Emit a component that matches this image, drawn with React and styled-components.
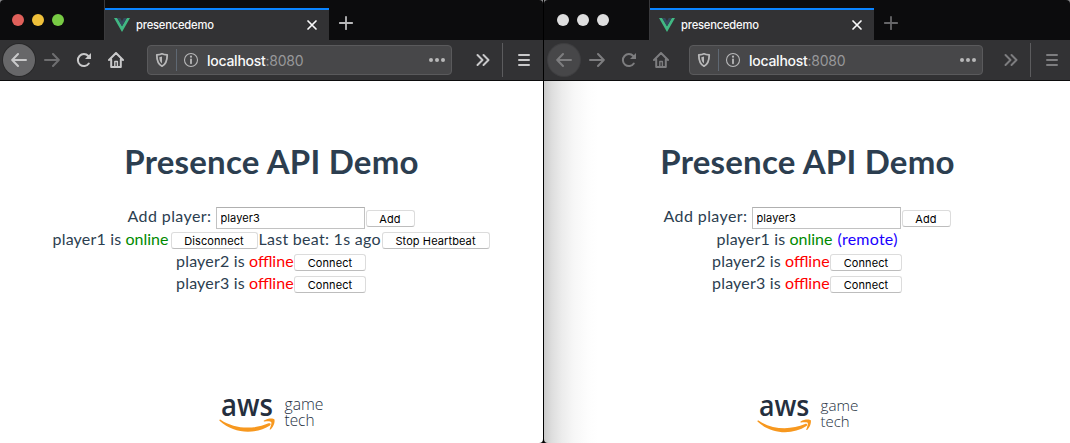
import React from "react";
import styled, { createGlobalStyle } from "styled-components";

const Global = createGlobalStyle`
  * { box-sizing: border-box; }
  body { margin: 0; background: #fff; overflow: hidden; }
`;

const Desktop = styled.div`
  display: flex;
  width: 1070px;
  height: 443px;
  overflow: hidden;
  background: #0b0b0b;
`;
const Window = styled.section`
  display: flex;
  flex-direction: column;
  flex: none;
  width: ${(p) => p.$width}px;
  border-right: ${(p) => (p.$focused ? "1px solid #000" : "0")};
`;
const TitleArea = styled.div`
  background: #8a8a8c;
`;
const TabStrip = styled.div`
  display: flex;
  height: 40px;
  border-radius: 4px 4px 0 0;
  background: #0c0c0d;
`;
const Lights = styled.div`
  display: flex;
  align-items: center;
  gap: 8px;
  width: ${(p) => p.$width}px;
  padding-left: ${(p) => p.$inset}px;
  border-right: 1px solid #3a3a3c;
`;
const Light = styled.span`
  width: 12px;
  height: 12px;
  border-radius: 50%;
  background: ${(p) => p.$color};
`;
const Tab = styled.div`
  display: flex;
  align-items: center;
  width: 224px;
  margin-top: 8px;
  padding: 0 11px 0 9px;
  border-top: 2px solid #0a84ff;
  background: #323234;
  svg { display: block; flex: none; }
`;
const TabTitle = styled.span`
  flex: 1;
  padding-left: 6px;
  font: 500 11.2px/16px Inter, "Liberation Sans", sans-serif;
  letter-spacing: -0.2px;
  color: #f9f9fa;
`;
const NewTab = styled.div`
  display: flex;
  align-items: center;
  padding: 6px 0 0 9px;
  color: ${(p) => p.$color};
`;
const Toolbar = styled.div`
  display: flex;
  align-items: center;
  height: 41px;
  padding-left: ${(p) => p.$inset}px;
  background: #323234;
  border-bottom: 1px solid #0c0c0d;
  color: ${(p) => p.$color};
  svg { display: block; flex: none; }
`;
const ToolButton = styled.div`
  display: grid;
  place-items: center;
  flex: none;
  width: 32px;
  height: 32px;
  opacity: ${(p) => (p.$dim ? 0.4 : 1)};
`;
const BackButton = styled(ToolButton)`
  border-radius: 50%;
  margin-right: 1px;
  background: ${(p) => p.$fill};
  box-shadow: 0 0 0 1px ${(p) => p.$ring};
`;
const UrlBar = styled.div`
  display: flex;
  align-items: center;
  flex: none;
  width: ${(p) => p.$width}px;
  height: 30px;
  margin-left: ${(p) => p.$gap}px;
  padding: 0 6px;
  border: 1px solid #5a5a5c;
  border-radius: 4px;
  background: #474749;
  color: #b8b8b9;
`;
const UrlDivider = styled.span`
  width: 1px;
  height: 22px;
  margin: 0 6px;
  background: #5f6873;
`;
const Url = styled.span`
  flex: 1;
  padding: 2px 0 0 8px;
  font: 500 14px/18px Inter, "Liberation Sans", sans-serif;
  letter-spacing: -0.26px;
  color: #f9f9fa;
`;
const Port = styled.span`
  font-weight: 400;
  color: #98989a;
`;
const Overflow = styled.div`
  margin-left: ${(p) => p.$gap}px;
`;
const MenuDivider = styled.span`
  width: 1px;
  height: 34px;
  margin: 0 13px 0 11px;
  background: #5c5c5e;
`;

const Page = styled.main`
  display: flex;
  flex-direction: column;
  align-items: center;
  flex: 1;
  padding-left: ${(p) => (p.$shaded ? 1 : 0)}px;
  border-bottom-right-radius: ${(p) => (p.$shaded ? 0 : 4)}px;
  border-bottom-left-radius: ${(p) => (p.$shaded ? 4 : 0)}px;
  background: ${(p) =>
    p.$shaded
      ? "linear-gradient(90deg, #cbcbcb 0, #dedede 8px, #ececec 18px, #f7f7f7 30px, #fdfdfd 44px, #fff 54px)"
      : "#fff"};
  font: 16px/22px Lato, "Noto Sans", sans-serif;
  color: #2c3e50;
`;
const Title = styled.h1`
  margin: 58px 0 0;
  font: 700 33px/44px Lato, "Noto Sans", sans-serif;
  letter-spacing: 0.22px;
  white-space: nowrap;
`;
const Row = styled.div`
  display: flex;
  align-items: center;
  height: 22px;
`;
const AddRow = styled(Row)`
  margin-top: 23px;
`;
const Text = styled.span`
  flex: none;
  width: ${(p) => p.$width}px;
  padding-bottom: ${(p) => p.$lift || 0}px;
  color: ${(p) => p.$color || "inherit"};
  letter-spacing: ${(p) => p.$tracking || 0}px;
  white-space: pre;
`;
const Field = styled.input`
  width: 149px;
  height: 22px;
  margin: 2px 1px 0 0;
  padding: 0 4px;
  border: 1px solid #c2c2c2;
  border-top-color: #b0b0b0;
  outline: 0;
  background: #fff;
  font: 11px Inter, "Liberation Sans", sans-serif;
  letter-spacing: 0.1px;
  color: #000;
`;
const Button = styled.button`
  flex: none;
  width: ${(p) => p.$width}px;
  height: 17px;
  margin: 3px 1px 0;
  padding: 0;
  border: 1px solid #dcdcdc;
  border-bottom-color: #bdbdbd;
  border-radius: 3px;
  background: #fff;
  font: 11px/14px Inter, "Liberation Sans", sans-serif;
  letter-spacing: 0.1px;
  color: #000;
`;
const AddButton = styled(Button)`
  margin-left: 0;
`;
const Logo = styled.svg`
  display: block;
  flex: none;
  margin-top: ${(p) => p.$top}px;
  margin-left: ${(p) => p.$left}px;
`;

const line = { fill: "none", stroke: "currentColor", strokeWidth: 2, strokeLinecap: "round", strokeLinejoin: "round" };

const VueMark = () => (
  <svg width="16" height="16" viewBox="0 0 16 16">
    <path d="M0 1h3.2L8 9.3 12.8 1H16L8 15z" fill="#41b883" />
    <path d="M3.2 1h3L8 4.2 9.8 1h3L8 9.3z" fill="#35495e" />
  </svg>
);
const Close = () => (
  <svg width="12" height="12" viewBox="0 0 12 12" {...line} stroke="#f9f9fa" strokeWidth="1.7">
    <path d="M2 2l8 8M10 2l-8 8" />
  </svg>
);
const Plus = () => (
  <svg width="16" height="16" viewBox="0 0 16 16" {...line} strokeWidth="1.8">
    <path d="M8 1.8v12.4M1.8 8h12.4" />
  </svg>
);
const Back = () => (
  <svg width="16" height="16" viewBox="0 0 16 16" {...line}>
    <path d="M15 8H1.5M7 2L1.2 8 7 14" />
  </svg>
);
const Forward = () => (
  <svg width="16" height="16" viewBox="0 0 16 16" {...line}>
    <path d="M1 8h13.5M9 2l5.8 6L9 14" />
  </svg>
);
const Reload = () => (
  <svg width="16" height="16" viewBox="0 0 16 16" {...line}>
    <path d="M12.8 11.5A6 6 0 1 1 12.3 4" />
    <path d="M15 1v6H9z" fill="currentColor" stroke="none" />
  </svg>
);
const Home = () => (
  <svg width="16" height="16" viewBox="0 0 16 16" {...line}>
    <path d="M1 8l7-7 7 7M3.2 7.5V15h9.6V7.5" />
    <path d="M6.8 14.5V9.5h2.6v5" strokeWidth="1.4" />
  </svg>
);
const Shield = () => (
  <svg width="16" height="16" viewBox="0 0 16 16" {...line}>
    <path d="M8 1.8c1.8.8 3.6 1 5.2 1.2 0 5.5-.8 9-5.2 11.2C3.6 12 2.8 8.5 2.8 3 4.4 2.8 6.2 2.6 8 1.8z" strokeWidth="1.8" />
    <path d="M8 4.5v7C6 10 5.4 8 5.3 5.2z" fill="currentColor" stroke="none" />
  </svg>
);
const Info = () => (
  <svg width="16" height="16" viewBox="0 0 16 16" {...line}>
    <circle cx="8" cy="8" r="6.5" strokeWidth="1.1" />
    <path d="M8 7.3v4" strokeWidth="1.8" />
    <circle cx="8" cy="4.7" r="1.1" fill="currentColor" stroke="none" />
  </svg>
);
const Dots = () => (
  <svg width="16" height="16" viewBox="0 0 16 16" fill="currentColor">
    <circle cx="2" cy="8" r="2" />
    <circle cx="8" cy="8" r="2" />
    <circle cx="14" cy="8" r="2" />
  </svg>
);
const Chevrons = () => (
  <svg width="16" height="16" viewBox="0 0 16 16" {...line}>
    <path d="M2.5 3l5 5-5 5M8.5 3l5 5-5 5" />
  </svg>
);
const Menu = () => (
  <svg width="16" height="16" viewBox="0 0 16 16" {...line}>
    <path d="M3 3h10M3 8h10M3 13h10" />
  </svg>
);

function AwsLogo({ top, left, scale = 1 }) {
  return (
    <Logo $top={top} $left={left} width={108 * scale} height={54 * scale} viewBox="0 -14 108 54">
      <text x="2" y="20.5" fontFamily="Open Sans" fontWeight="600" fontSize="30.5" textLength="52" lengthAdjust="spacingAndGlyphs" fill="#252f3e">aws</text>
      <path d="M1.6 24.7c14 9.5 33 10 48 3.6 1.7-.7 2.9 1 1.4 2.1C37 39.6 15 39.2.8 26c-.9-.9-.2-1.8.8-1.3z" fill="#f7981f" />
      <path d="M45 25.6c3.2-2.3 8.800-2.600 10.300-1.400 1 1.700-.4 7.300-3.400 10-.6.6-1.400.2-1-.6 1-2.500 2-5.500 1.300-6.500-.9-1.100-4.600-.7-6.600-.5-.9 0-1.200-.5-.6-1z" fill="#f7981f" />
      <g fontFamily="Open Sans" fontWeight="300" fontSize="15.5" fill="#252f3e">
        <text x="65.5" y="15.2" textLength="39" lengthAdjust="spacingAndGlyphs">game</text>
        <text x="65.5" y="31" textLength="30" lengthAdjust="spacingAndGlyphs">tech</text>
      </g>
    </Logo>
  );
}

function Chrome({ focused }) {
  const tone = focused ? "#c9c9ca" : "#7d7d7f";
  const lights = focused ? ["#e0605a", "#efc03a", "#78cb44"] : ["#dedede", "#dedede", "#dedede"];
  return (
    <>
      <TitleArea>
        <TabStrip>
          <Lights $width={focused ? 105 : 106} $inset={focused ? 12 : 13}>
            {lights.map((c, i) => <Light key={i} $color={c} />)}
          </Lights>
          <Tab>
            <VueMark />
            <TabTitle>presencedemo</TabTitle>
            <Close />
          </Tab>
          <NewTab $color={focused ? "#b9b9ba" : "#666668"}><Plus /></NewTab>
        </TabStrip>
      </TitleArea>
      <Toolbar $inset={focused ? 3 : 4} $color={tone}>
        <BackButton $fill={focused ? "#676769" : "#474749"} $ring={focused ? "#29292a" : "#3f3f41"}><Back /></BackButton>
        <ToolButton $dim={focused}><Forward /></ToolButton>
        <ToolButton><Reload /></ToolButton>
        <ToolButton><Home /></ToolButton>
        <UrlBar $width={focused ? 305 : 294} $gap={focused ? 15 : 12}>
          <Shield />
          <UrlDivider />
          <Info />
          <Url>localhost<Port>:8080</Port></Url>
          <Dots />
        </UrlBar>
        <Overflow $gap={focused ? 23 : 20}><Chevrons /></Overflow>
        <MenuDivider />
        <Menu />
      </Toolbar>
    </>
  );
}

function AddPlayer() {
  return (
    <AddRow>
      <Text $width={88} $tracking={0.4} $lift={2}>Add player:</Text>
      <Field defaultValue="player3" />
      <AddButton $width={49}>Add</AddButton>
    </AddRow>
  );
}
function OfflinePlayer({ name }) {
  return (
    <Row>
      <Text $width={73} $tracking={0.2}>{name} is</Text>
      <Text $width={44} $color="#ff0000">offline</Text>
      <Button $width={72}>Connect</Button>
    </Row>
  );
}

export default function App() {
  return (
    <Desktop>
      <Global />
      <Window $width={544} $focused>
        <Chrome focused />
        <Page>
          <Title>Presence API Demo</Title>
          <AddPlayer />
          <Row>
            <Text $width={73} $tracking={0.2}>player1 is</Text>
            <Text $width={44} $color="#008a00">online</Text>
            <Button $width={87}>Disconnect</Button>
            <Text $width={122} $tracking={0.28}>Last beat: 1s ago</Text>
            <Button $width={108}>Stop Heartbeat</Button>
          </Row>
          <OfflinePlayer name="player2" />
          <OfflinePlayer name="player3" />
          <AwsLogo top={87} left={3} />
        </Page>
      </Window>
      <Window $width={526}>
        <Chrome />
        <Page $shaded>
          <Title>Presence API Demo</Title>
          <AddPlayer />
          <Row>
            <Text $width={73} $tracking={0.2}>player1 is</Text>
            <Text $width={48} $color="#008a00">online</Text>
            <Text $width={61} $color="#1a00ff" $tracking={0.25}>(remote)</Text>
          </Row>
          <OfflinePlayer name="player2" />
          <OfflinePlayer name="player3" />
          <AwsLogo top={89} left={4} scale={0.97} />
        </Page>
      </Window>
    </Desktop>
  );
}
